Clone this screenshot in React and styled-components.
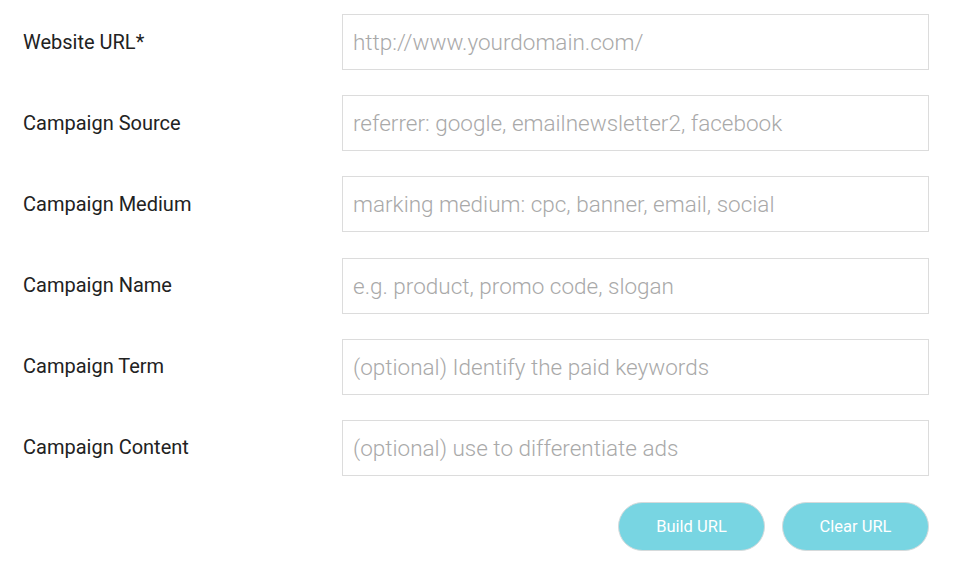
import React from 'react';
import styled, { createGlobalStyle } from 'styled-components';

const GlobalStyle = createGlobalStyle`
  body {
    margin: 0;
    background: #fff;
    font-family: Roboto, "Liberation Sans", sans-serif;
  }
`;

const Form = styled.form`
  padding: 14px 45px 0 23px;
  display: flex;
  flex-direction: column;
  gap: 25.2px;
`;

const Row = styled.div`
  display: grid;
  grid-template-columns: 319px 1fr;
  align-items: center;
`;

const Label = styled.label`
  font-size: 20px;
  color: #222;
  padding-bottom: 1px;
`;

const Input = styled.input`
  box-sizing: border-box;
  width: 100%;
  height: 56px;
  border: 1px solid #dcdcdc;
  padding: 0 10px;
  font-family: Roboto, "Liberation Sans", sans-serif;
  font-weight: 300;
  font-size: 22.5px;
  color: #333;
  outline: none;
  &::placeholder {
    color: #a9a9a9;
  }
`;

const Actions = styled.div`
  display: flex;
  justify-content: flex-end;
  gap: 17px;
  margin-top: 0.8px;
`;

const Button = styled.button`
  width: 147px;
  height: 49px;
  border-radius: 25px;
  border: 1px solid #d6dadb;
  background: #78d5e2;
  color: #fff;
  font-family: Roboto, "Liberation Sans", sans-serif;
  font-size: 16.5px;
  cursor: pointer;
`;

const fields = [
  ['Website URL*', 'http://www.yourdomain.com/'],
  ['Campaign Source', 'referrer: google, emailnewsletter2, facebook'],
  ['Campaign Medium', 'marking medium: cpc, banner, email, social'],
  ['Campaign Name', 'e.g. product, promo code, slogan'],
  ['Campaign Term', '(optional) Identify the paid keywords'],
  ['Campaign Content', '(optional) use to differentiate ads'],
];

export default function App() {
  return (
    <>
      <GlobalStyle />
      <Form onSubmit={e => e.preventDefault()}>
        {fields.map(([label, placeholder]) => (
          <Row key={label}>
            <Label>{label}</Label>
            <Input placeholder={placeholder} />
          </Row>
        ))}
        <Actions>
          <Button type="button">Build URL</Button>
          <Button type="button">Clear URL</Button>
        </Actions>
      </Form>
    </>
  );
}
